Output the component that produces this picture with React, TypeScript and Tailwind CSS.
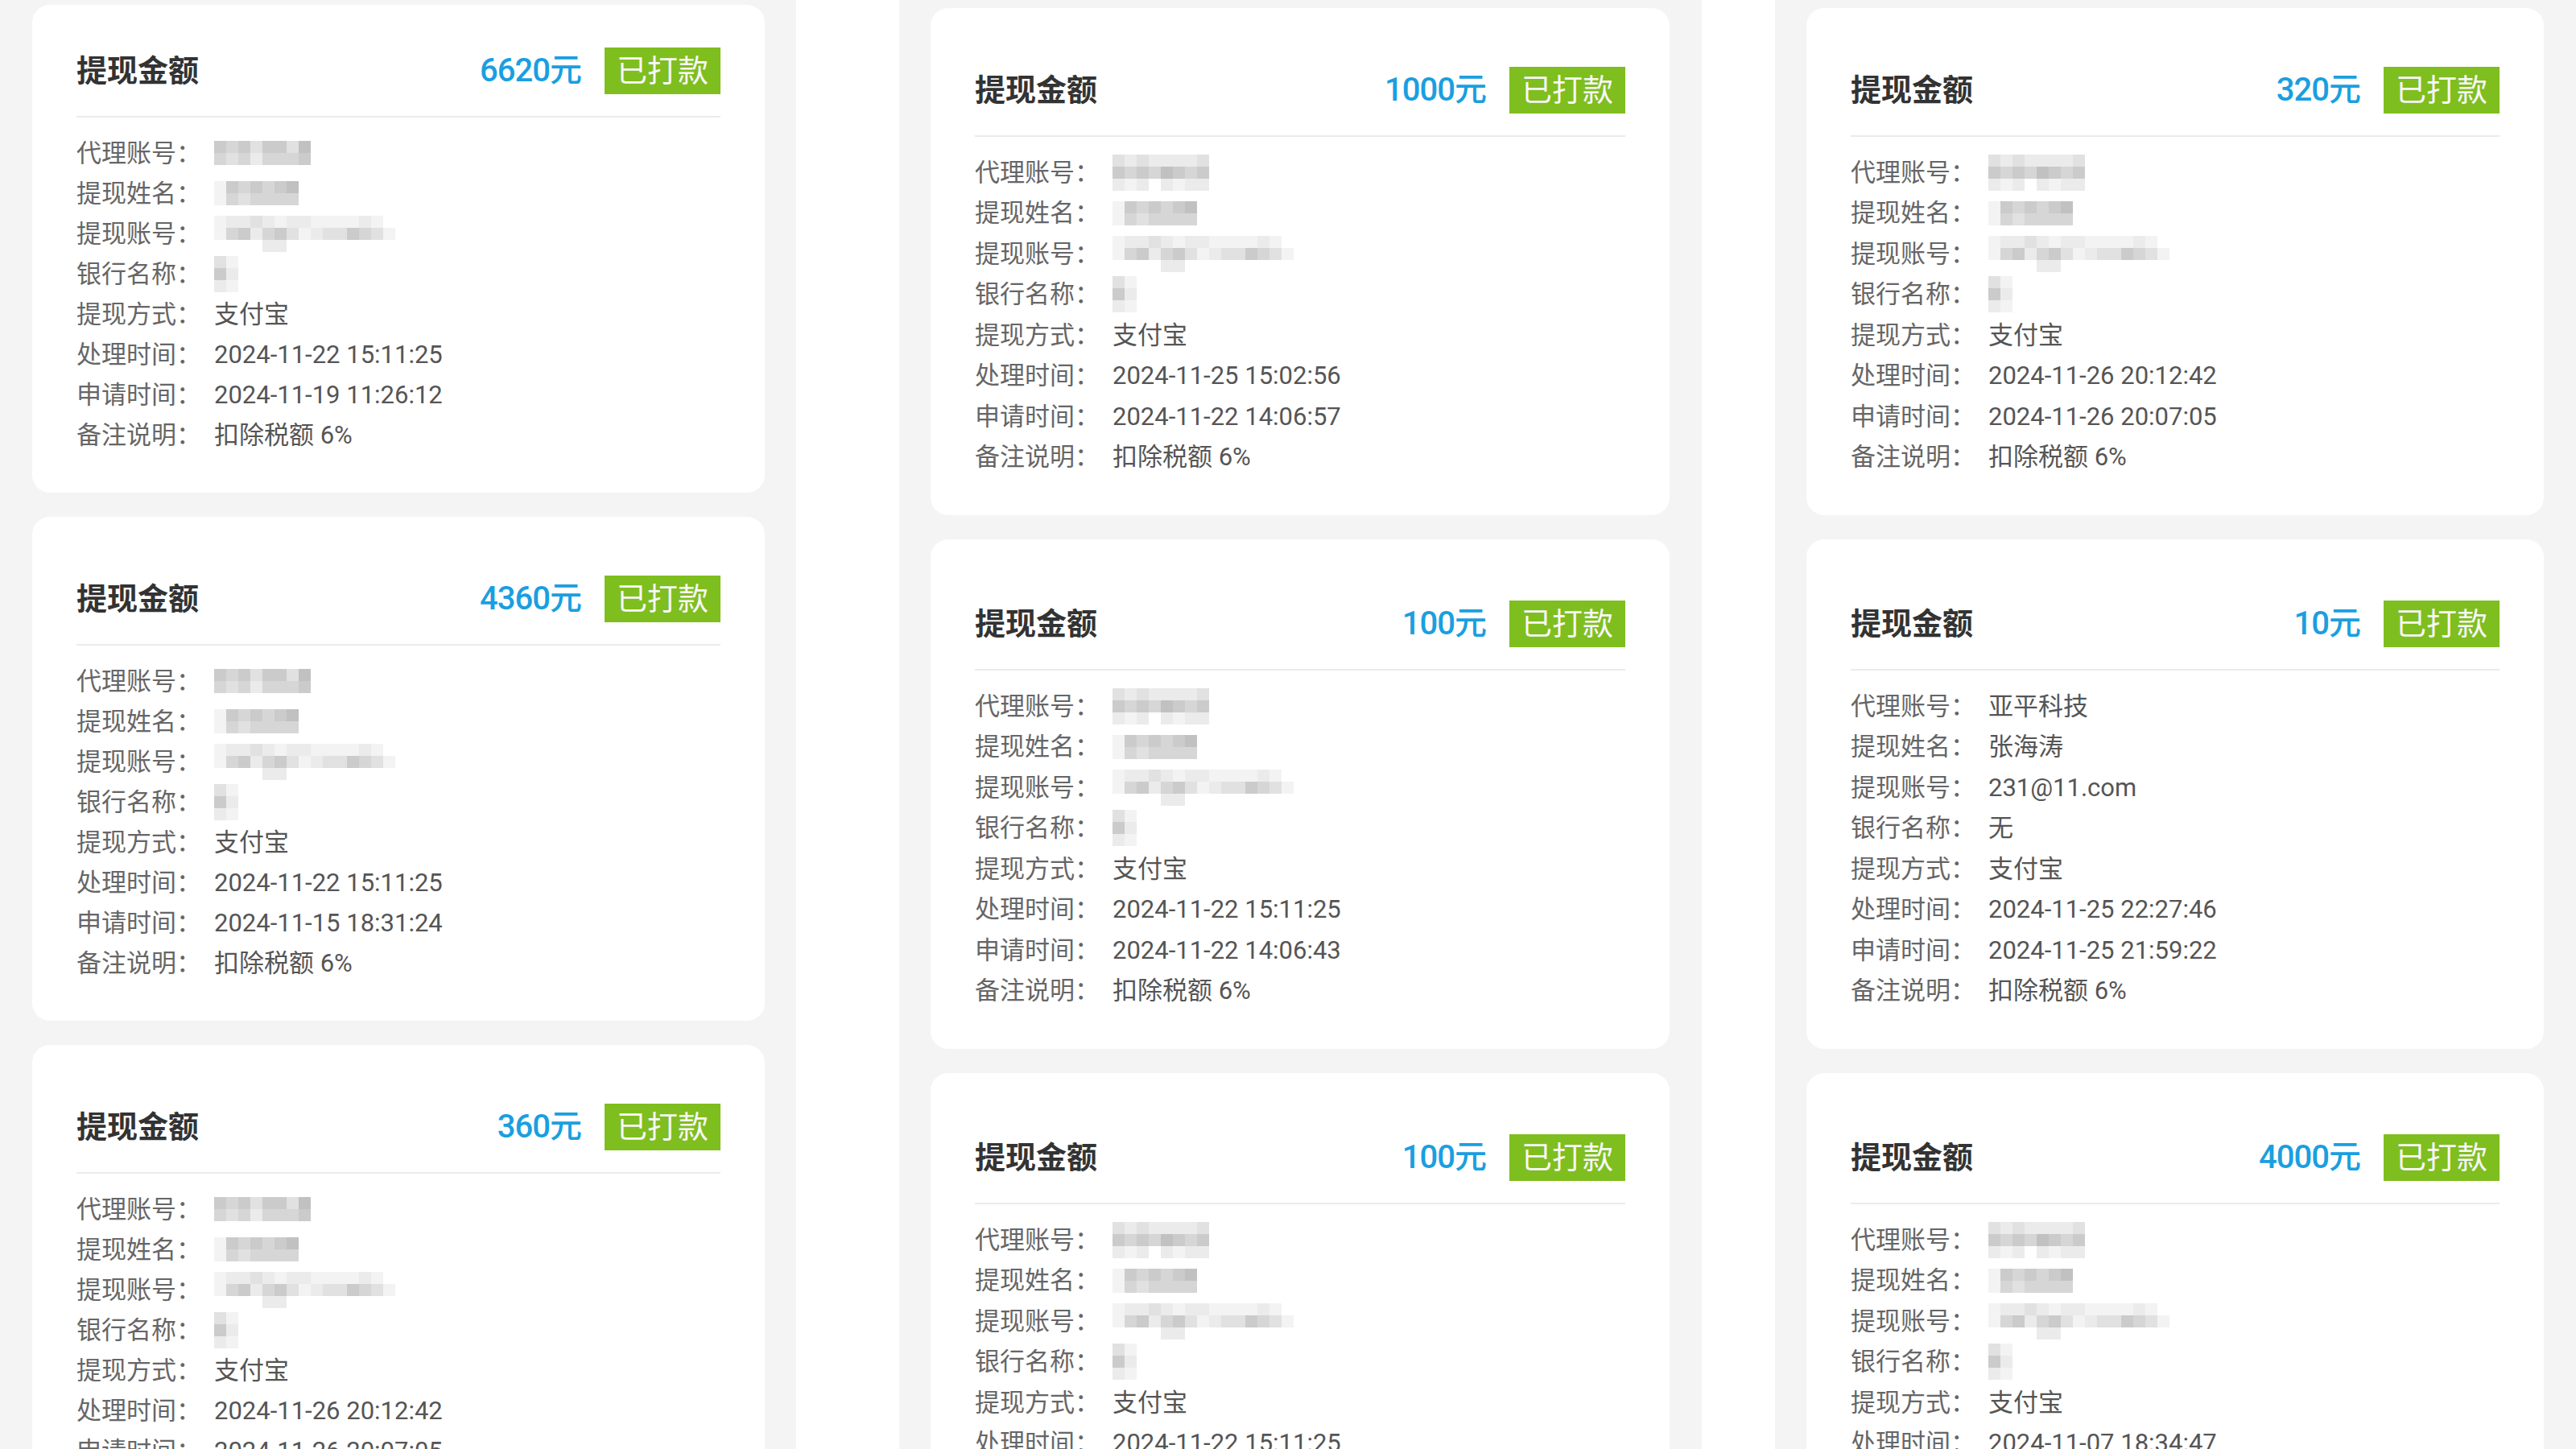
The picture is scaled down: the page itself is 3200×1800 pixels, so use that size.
import React from "react";

const shade: Record<string, string> = {
  "0": "bg-transparent",
  "1": "bg-[#f3f3f3]",
  "2": "bg-[#ebebeb]",
  "3": "bg-[#e1e1e1]",
  "4": "bg-[#d6d6d6]",
  "5": "bg-[#cbcbcb]",
  "6": "bg-[#c1c1c1]",
};

function Mosaic({ rows }: { rows: string[] }) {
  return (
    <div className="flex flex-col blur-[0.7px]">
      {rows.map((r, i) => (
        <div key={i} className="flex">
          {r.split("").map((c, j) => (
            <div key={j} className={`w-[15px] h-[15px] ${shade[c]}`} />
          ))}
        </div>
      ))}
    </div>
  );
}

const M = {
  agent: ["32322223", "54546545", "21202122"],
  agent2: ["54535536", "43424445"],
  name: ["1545456", "1434444"],
  account: ["122321221111210", "145245312335431", "000022000000000"],
  bank: ["31", "52", "21"],
};

type Val = string | string[];

type CardData = {
  amount: string;
  agent: Val;
  name: Val;
  account: Val;
  bank: Val;
  done: string;
  apply: string;
};

function Value({ v }: { v: Val }) {
  if (typeof v === "string") return <span className="text-[#555]">{v}</span>;
  return <Mosaic rows={v} />;
}

function Row({ label, v, rowH }: { label: string; v: Val; rowH: string }) {
  return (
    <div className={`${rowH} flex items-center`}>
      <span className="w-[171px] shrink-0 text-[#666]">{label}</span>
      <Value v={v} />
    </div>
  );
}

function Card({ d, pt, rowH }: { d: CardData; pt: string; rowH: string }) {
  return (
    <div className={`bg-white rounded-[22px] px-[55px] pb-[47px] ${pt}`}>
      <div className="h-[60px] flex items-center justify-between">
        <span className="text-[38px] font-semibold text-[#333] leading-none">提现金额</span>
        <div className="flex items-center gap-[29px]">
          <span className="text-[40px] font-medium text-[#1a9fe0] leading-none tracking-[-1px]">
            {d.amount}
          </span>
          <span className="h-[58px] px-[15px] flex items-center bg-[#7fbe1f] text-[#f7f7f7] text-[38px] leading-none">
            已打款
          </span>
        </div>
      </div>
      <div className="mt-[26px] h-[2px] bg-[#ebebeb]" />
      <div className="pt-[19px] text-[31px] leading-none">
        <Row rowH={rowH} label="代理账号：" v={d.agent} />
        <Row rowH={rowH} label="提现姓名：" v={d.name} />
        <Row rowH={rowH} label="提现账号：" v={d.account} />
        <Row rowH={rowH} label="银行名称：" v={d.bank} />
        <Row rowH={rowH} label="提现方式：" v="支付宝" />
        <Row rowH={rowH} label="处理时间：" v={d.done} />
        <Row rowH={rowH} label="申请时间：" v={d.apply} />
        <Row rowH={rowH} label="备注说明：" v="扣除税额 6%" />
      </div>
    </div>
  );
}

const blurred = (amount: string, done: string, apply: string, alt?: boolean): CardData => ({
  amount,
  agent: alt ? M.agent2 : M.agent,
  name: M.name,
  account: M.account,
  bank: M.bank,
  done,
  apply,
});

const col1: CardData[] = [
  blurred("6620元", "2024-11-22 15:11:25", "2024-11-19 11:26:12", true),
  blurred("4360元", "2024-11-22 15:11:25", "2024-11-15 18:31:24", true),
  blurred("360元", "2024-11-26 20:12:42", "2024-11-26 20:07:05", true),
];

const col2: CardData[] = [
  blurred("1000元", "2024-11-25 15:02:56", "2024-11-22 14:06:57"),
  blurred("100元", "2024-11-22 15:11:25", "2024-11-22 14:06:43"),
  blurred("100元", "2024-11-22 15:11:25", "2024-11-22 14:06:43"),
];

const col3: CardData[] = [
  blurred("320元", "2024-11-26 20:12:42", "2024-11-26 20:07:05"),
  {
    amount: "10元",
    agent: "亚平科技",
    name: "张海涛",
    account: "231@11.com",
    bank: "无",
    done: "2024-11-25 22:27:46",
    apply: "2024-11-25 21:59:22",
  },
  blurred("4000元", "2024-11-07 18:34:47", "2024-11-07 18:30:12"),
];

function Column({
  cards,
  className,
  pts,
  rowH,
}: {
  cards: CardData[];
  className: string;
  pts: string[];
  rowH: string;
}) {
  return (
    <div className={`shrink-0 h-full bg-[#f4f4f4] flex flex-col gap-[30px] ${className}`}>
      {cards.map((c, i) => (
        <Card key={i} d={c} pt={pts[i]} rowH={rowH} />
      ))}
    </div>
  );
}

export default function App() {
  return (
    <div className="w-[3200px] h-[1800px] overflow-hidden bg-white flex font-[Roboto,'Noto_Sans_CJK_SC',sans-serif]">
      <Column
        cards={col1}
        pts={["pt-[52px]", "pt-[72px]", "pt-[72px]"]}
        rowH="h-[50px]"
        className="w-[989px] pl-[40px] pr-[39px] pt-[6px]"
      />
      <div className="w-[128px] shrink-0" />
      <Column
        cards={col2}
        pts={["pt-[72px]", "pt-[75px]", "pt-[75px]"]}
        rowH="h-[50.5px]"
        className="w-[997px] pl-[39px] pr-[40px] pt-[10px]"
      />
      <div className="w-[91px] shrink-0" />
      <Column
        cards={col3}
        pts={["pt-[72px]", "pt-[75px]", "pt-[75px]"]}
        rowH="h-[50.5px]"
        className="w-[995px] pl-[39px] pr-[40px] pt-[10px]"
      />
    </div>
  );
}
